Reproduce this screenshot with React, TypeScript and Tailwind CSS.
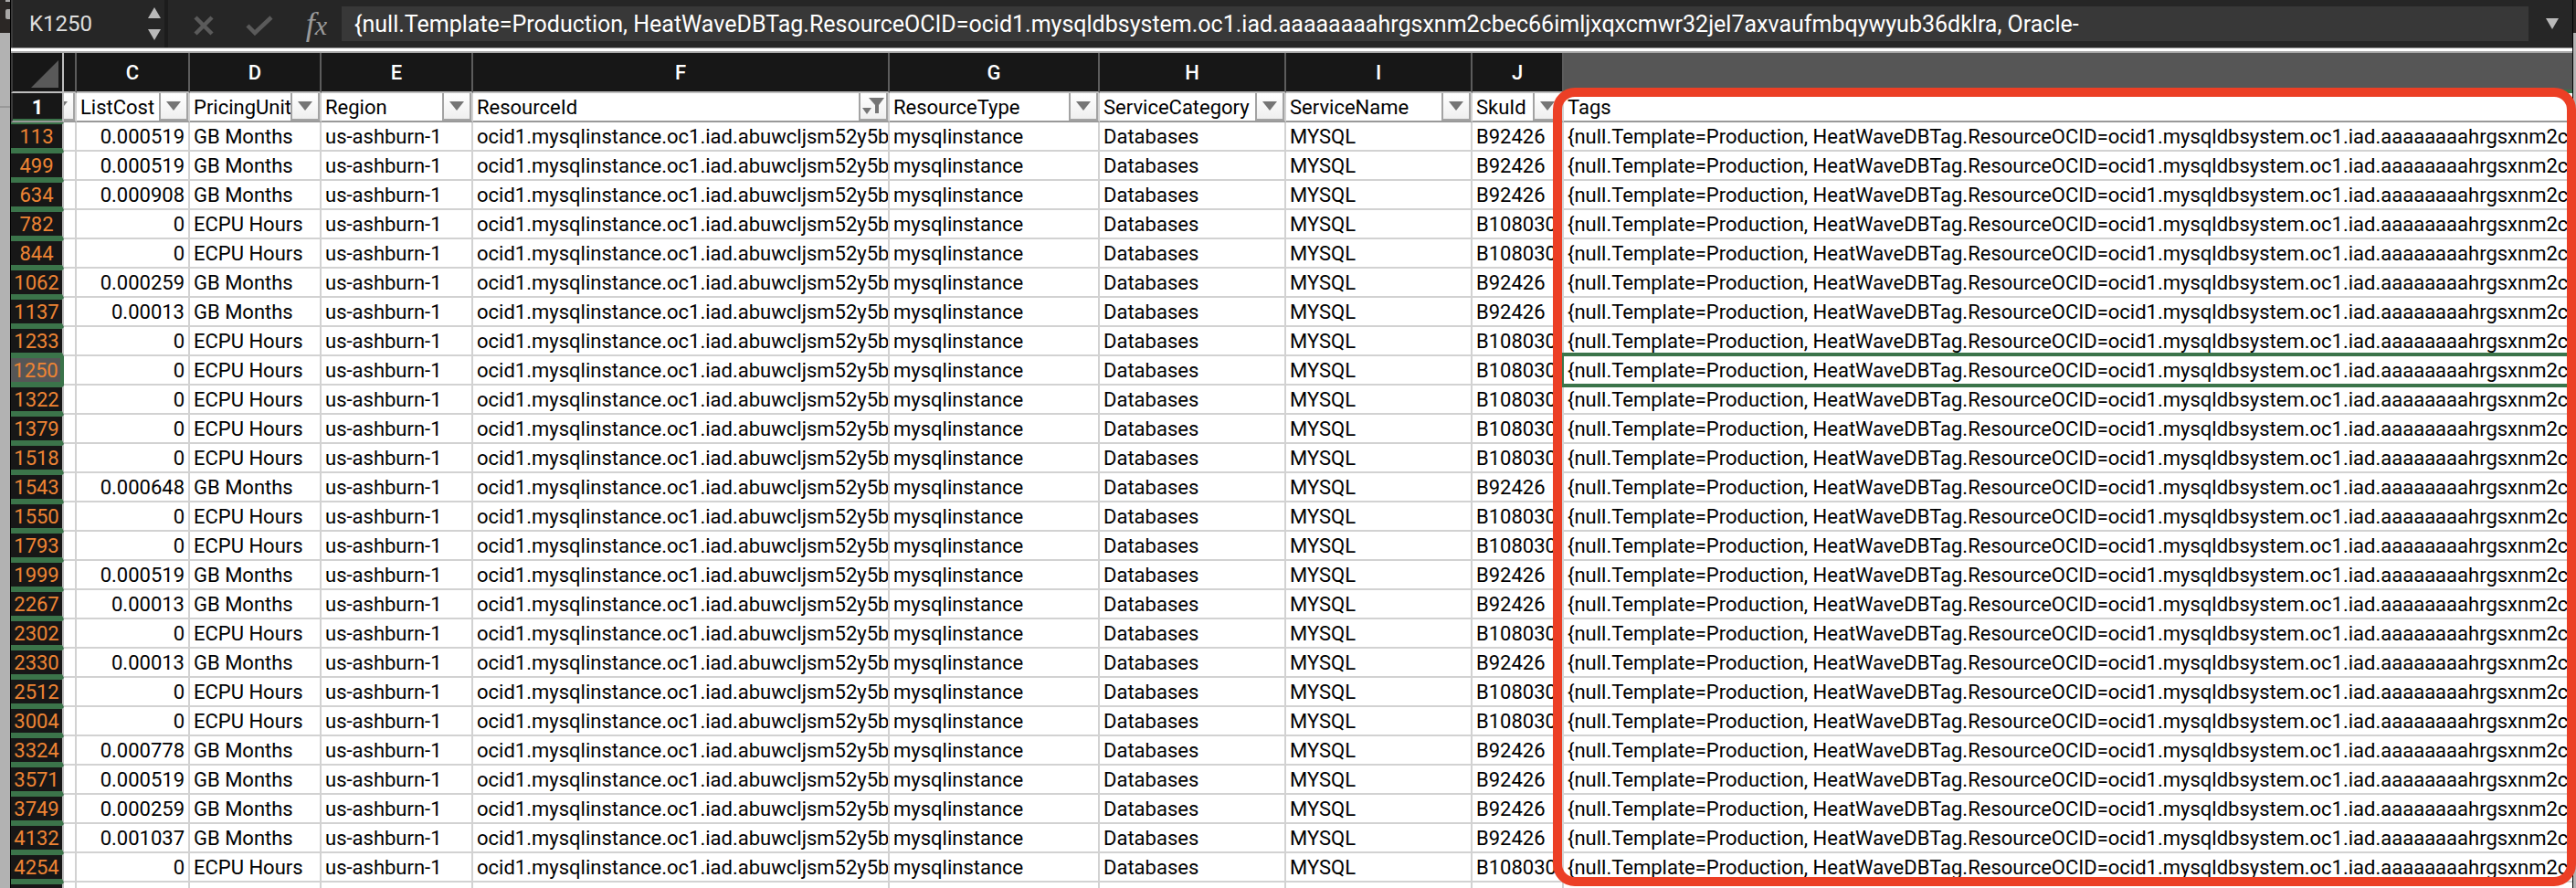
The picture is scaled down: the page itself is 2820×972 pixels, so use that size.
import React from "react";

const RESOURCE_ID = "ocid1.mysqlinstance.oc1.iad.abuwcljsm52y5bk";
const TAGS =
  "{null.Template=Production, HeatWaveDBTag.ResourceOCID=ocid1.mysqldbsystem.oc1.iad.aaaaaaaahrgsxnm2cbec66imljxqxcmwr32jel7axvaufmbqywyub36dklra, Oracle-";

const GB = "GB Months";
const ECPU = "ECPU Hours";

const rows: [number, string, string][] = [
  [113, "0.000519", GB],
  [499, "0.000519", GB],
  [634, "0.000908", GB],
  [782, "0", ECPU],
  [844, "0", ECPU],
  [1062, "0.000259", GB],
  [1137, "0.00013", GB],
  [1233, "0", ECPU],
  [1250, "0", ECPU],
  [1322, "0", ECPU],
  [1379, "0", ECPU],
  [1518, "0", ECPU],
  [1543, "0.000648", GB],
  [1550, "0", ECPU],
  [1793, "0", ECPU],
  [1999, "0.000519", GB],
  [2267, "0.00013", GB],
  [2302, "0", ECPU],
  [2330, "0.00013", GB],
  [2512, "0", ECPU],
  [3004, "0", ECPU],
  [3324, "0.000778", GB],
  [3571, "0.000519", GB],
  [3749, "0.000259", GB],
  [4132, "0.001037", GB],
  [4254, "0", ECPU],
];

const SELECTED = 1250;

const fields = [
  { letter: "C", name: "ListCost" },
  { letter: "D", name: "PricingUnit" },
  { letter: "E", name: "Region" },
  { letter: "F", name: "ResourceId", filtered: true },
  { letter: "G", name: "ResourceType" },
  { letter: "H", name: "ServiceCategory" },
  { letter: "I", name: "ServiceName" },
  { letter: "J", name: "SkuId" },
];

function FilterButton({ label, filtered = false }: { label: string; filtered?: boolean }) {
  return (
    <button
      type="button"
      aria-label={label}
      className="flex h-[30px] w-8 shrink-0 items-center justify-center border-x-2 border-b-2 border-[#a3a3a3] bg-linear-to-b from-white to-[#efefef]"
    >
      {filtered ? (
        <svg width="24" height="22" viewBox="0 0 24 22" fill="#757575">
          <path d="M0 13h10l-5 7z" />
          <path d="M7 2h17l-6 8v9h-4v-9z" />
        </svg>
      ) : (
        <svg width="16" height="10" viewBox="0 0 16 10" fill="#757575">
          <path d="M0 0h16L8 10z" />
        </svg>
      )}
    </button>
  );
}

function FormulaBar() {
  return (
    <div className="flex h-[52px] items-center bg-[#262626]">
      <div className="flex h-full w-[170px] items-center justify-between border-r-4 border-[#1c1c1c] pl-[18px] pr-1">
        <input
          aria-label="Name box"
          defaultValue="K1250"
          className="w-28 bg-transparent text-2xl text-[#dedede] outline-none"
        />
        <div className="flex flex-col gap-3">
          <button type="button" aria-label="Previous">
            <svg width="14" height="12" viewBox="0 0 14 12" fill="#b9b9b9" className="block">
              <path d="M0 12h14L7 0z" />
            </svg>
          </button>
          <button type="button" aria-label="Next">
            <svg width="14" height="12" viewBox="0 0 14 12" fill="#b9b9b9" className="block">
              <path d="M0 0h14L7 12z" />
            </svg>
          </button>
        </div>
      </div>
      <div className="flex w-[190px] items-center justify-between pl-7 pr-4 pt-1">
        <button type="button" aria-label="Cancel">
          <svg width="22" height="22" viewBox="0 0 22 22" fill="none" stroke="#5a5a5a" strokeWidth="4.5" className="block">
            <path d="M2 2l18 18M20 2L2 20" />
          </svg>
        </button>
        <button type="button" aria-label="Enter">
          <svg width="30" height="22" viewBox="0 0 30 22" fill="none" stroke="#5a5a5a" strokeWidth="4.5" className="block">
            <path d="M2 11l8 8L28 2" />
          </svg>
        </button>
        <button
          type="button"
          className="font-['Liberation_Serif',serif] text-4xl italic leading-8 text-[#9a9a9a]"
        >
          f<span className="text-3xl">x</span>
        </button>
      </div>
      <input
        aria-label="Formula"
        defaultValue={TAGS}
        className="h-[38px] min-w-0 flex-1 bg-[#383838] pl-3.5 text-[25px] text-white outline-none"
      />
      <button type="button" aria-label="Expand formula bar" className="flex w-12 justify-center pl-1">
        <svg width="14" height="12" viewBox="0 0 14 12" fill="#b9b9b9">
          <path d="M0 0h14L7 12z" />
        </svg>
      </button>
    </div>
  );
}

function Cell({ children, right = false }: { children?: React.ReactNode; right?: boolean }) {
  return (
    <td className="h-8 border-b-2 border-r-2 border-[#d2d2d2] p-0">
      <div
        className={
          right
            ? "h-[30px] overflow-hidden whitespace-nowrap pr-1 text-right"
            : "h-[30px] overflow-hidden whitespace-nowrap pl-1"
        }
      >
        {children}
      </div>
    </td>
  );
}

export default function App() {
  return (
    <div className="flex h-screen overflow-hidden bg-white font-[Roboto,sans-serif] text-black">
      <div className="flex w-3 shrink-0 flex-col border-r border-black bg-[#b2b2b2]">
        <div className="flex h-9 flex-col items-end justify-start gap-2 bg-[#2b2725]">
          <div className="h-0.5 w-[5px] bg-[#a9a7a6]" />
          <div className="h-[11px] w-[5px] rounded-l-xs bg-[#a9a7a6]" />
        </div>
        <div className="h-[82px] border-b-2 border-[#999999]" />
      </div>

      <div className="relative min-w-0 flex-1">
        <div className="border-l-2 border-[#3a3a3a]">
          <FormulaBar />
        </div>
        <div className="h-1.5 border-b-2 border-t border-t-[#999999] border-b-[#a8a8a8] bg-white" />

        <table className="w-full table-fixed border-separate border-spacing-0 text-[22px] leading-8">
          <colgroup>
            <col className="w-[58px]" />
            <col className="w-[14px]" />
            <col className="w-[124px]" />
            <col className="w-[144px]" />
            <col className="w-[166px]" />
            <col className="w-[456px]" />
            <col className="w-[230px]" />
            <col className="w-[204px]" />
            <col className="w-[204px]" />
            <col className="w-[100px]" />
            <col />
          </colgroup>
          <thead>
            <tr className="h-11 bg-[#171717] text-white">
              <th className="border-b-2 border-l-2 border-r-2 border-l-[#3a3a3a] border-b-[#bdbdbd] border-r-[#bdbdbd] p-0">
                <svg width="30" height="30" viewBox="0 0 30 30" fill="#595959" className="ml-auto mr-1 mt-1 block">
                  <path d="M30 0v30H0z" />
                </svg>
              </th>
              <th className="border-b-2 border-r-2 border-b-[#bdbdbd] border-r-[#5c5c5c] p-0" />
              {fields.map((f) => (
                <th
                  key={f.letter}
                  scope="col"
                  className="border-b-2 border-r-2 border-b-[#bdbdbd] border-r-[#5c5c5c] p-0 pt-0.5 font-medium"
                >
                  {f.letter}
                </th>
              ))}
              <th className="border-b-4 border-[#3b744a] bg-[#565656] p-0" />
            </tr>
            <tr className="h-8">
              <th className="border-b-2 border-l-2 border-r-2 border-l-[#3a3a3a] border-b-[#999999] border-r-[#bdbdbd] bg-[#171717] p-0 font-bold text-white">
                <div className="h-[30px] border-b-2 border-[#3b744a]">1</div>
              </th>
              <th className="border-b-2 border-r-2 border-b-[#999999] border-r-[#d2d2d2] p-0">
                <div className="flex h-[30px] overflow-hidden">
                  <div className="-ml-5">
                    <FilterButton label="Filter" />
                  </div>
                </div>
              </th>
              {fields.map((f) => (
                <th
                  key={f.name}
                  scope="col"
                  className="border-b-2 border-r-2 border-b-[#999999] border-r-[#d2d2d2] p-0 text-left font-normal"
                >
                  <div className="flex h-[30px] justify-between pl-1">
                    <span className="min-w-0 whitespace-nowrap">{f.name}</span>
                    <FilterButton label={`Filter ${f.name}`} filtered={f.filtered} />
                  </div>
                </th>
              ))}
              <th scope="col" className="border-b-2 border-[#999999] p-0 text-left font-normal">
                <div className="h-[30px] pl-1">Tags</div>
              </th>
            </tr>
          </thead>
          <tbody>
            {rows.map(([n, cost, unit]) => (
              <tr key={n} className="h-8">
                <th
                  scope="row"
                  className={
                    n === SELECTED
                      ? "border-b-4 border-r-4 border-t-2 border-[#3b744a] bg-[#565656] p-0 font-normal leading-7 text-[#ee8434]"
                      : "border-b-4 border-r-2 border-t-2 border-[#3b744a] border-r-[#bdbdbd] bg-[#171717] p-0 font-normal leading-7 text-[#ee8434]"
                  }
                >
                  <div className="h-[26px]">{n}</div>
                </th>
                <Cell />
                <Cell right>{cost}</Cell>
                <Cell>{unit}</Cell>
                <Cell>us-ashburn-1</Cell>
                <Cell>{RESOURCE_ID}</Cell>
                <Cell>mysqlinstance</Cell>
                <Cell>Databases</Cell>
                <Cell>MYSQL</Cell>
                <Cell>{unit === GB ? "B92426" : "B108030"}</Cell>
                <td className="relative h-8 border-b-2 border-[#d2d2d2] p-0">
                  <div className="h-[30px] overflow-hidden whitespace-nowrap pl-1">{TAGS}</div>
                  {n === SELECTED && (
                    <div className="absolute -bottom-1 -left-0.5 -top-1 right-0 border-y-4 border-l-2 border-[#3b744a]" />
                  )}
                </td>
              </tr>
            ))}
            <tr className="h-8">
              <th className="border-r-2 border-t-2 border-r-[#bdbdbd] border-t-[#3b744a] bg-[#171717]" />
              <Cell />
              {fields.map((f) => (
                <Cell key={f.letter} />
              ))}
              <td />
            </tr>
          </tbody>
        </table>

        <div className="pointer-events-none absolute -right-1 bottom-0.5 left-[1688px] top-24 z-10 rounded-3xl border-10 border-[#ec3f25]" />
      </div>

      <div className="flex w-1 shrink-0 flex-col border-l border-black bg-[#b2b2b2]">
        <div className="h-9 bg-[#2b2725]" />
      </div>
    </div>
  );
}
